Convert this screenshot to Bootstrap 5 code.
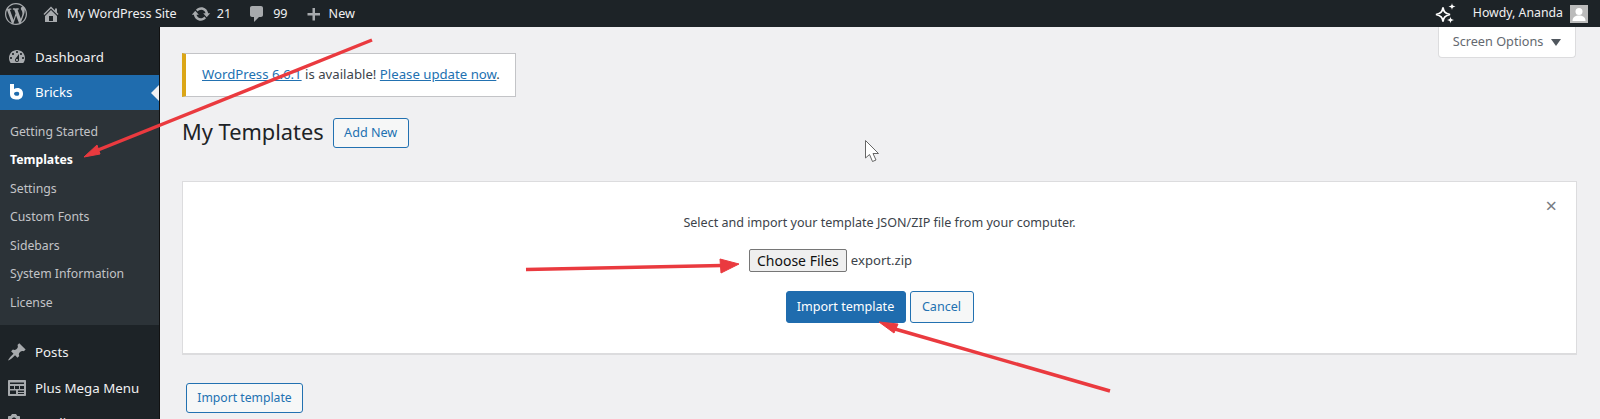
<!DOCTYPE html>
<html lang="en"><head><meta charset="utf-8"><title>My Templates</title>
<link href="https://cdn.jsdelivr.net/npm/bootstrap@5.3.0/dist/css/bootstrap.min.css" rel="stylesheet">
<style>
html,body{height:419px;overflow:hidden}
body{font-family:"Noto Sans","Open Sans",sans-serif;font-size:12.55px;background:#f0f0f2;color:#3c434a;position:relative}
svg.ico{fill:currentColor;display:block;flex:none}
.wpbar{height:27px;background:#1d2327;color:#f0f0f1;font-size:12.6px;padding:0 12px 0 5px;white-space:nowrap}
.wpbar svg{color:#a7aaad}
.wpbar .bitem{line-height:27px;gap:6px}
.wpbar .howdy{font-size:12.3px}
.wplogo{margin-right:14px}
.wpgap1{margin-left:14px}
.wpgap2{margin-left:16px}
.wpgap3{margin-left:15px}
.wpsparkle{margin-right:15px}
.wpavatar{margin-left:7px;display:block}
.wpside{width:160px;height:392px;flex:none;background:#1d2327;border-right:1px solid #111;padding-top:12px;color:#f0f0f1;font-size:13.3px;overflow:hidden}
.sitem{height:35.5px;padding-left:7px;gap:8px;color:#f0f0f1;white-space:nowrap}
.sitem span{padding-top:2px}
.sitem svg{color:#a7aaad}
.sitem.onit{background:#1f6cae;color:#fff;position:relative;height:35px}
.sitem.onit svg{color:#fff}
.sitem.onit::after{content:"";position:absolute;right:0;top:10px;border:8px solid transparent;border-right-color:#f0f0f2;border-left:0}
.ssub{background:#2c3338;padding:8px 0 8px;font-size:12.25px;color:#c3c4c7;height:215px}
.ssub div{height:28.5px;line-height:28.5px;padding-left:10px}
.ssub .onsub{color:#fff;font-weight:700}
.ssubgap{height:10px}
.wpmain{padding:26px 23px 0 22px;min-width:0}
.wpnotice{align-self:flex-start;height:44px;width:334px;background:#fff;border:1px solid #c3c4c7;border-left:4px solid #dba617;padding-left:16px;line-height:41px;font-size:13.2px;white-space:nowrap}
.wpnotice a,.wplink{color:#2271b1}
.wptitle{margin-top:21px;height:30px;gap:9px}
.wptitle h1{font-size:21.8px;font-weight:400;color:#1d2327;margin:-2px 0 0;line-height:30px;white-space:nowrap}
.wpbtn.btn{--bs-btn-padding-x:0;--bs-btn-padding-y:0;--bs-btn-font-size:12.6px;--bs-btn-line-height:28px;--bs-btn-color:#2271b1;--bs-btn-border-color:#2271b1;--bs-btn-bg:#f6f7f7;--bs-btn-border-radius:3px;white-space:nowrap}
.wpadd.btn{width:76px}
.wpcancel.btn{width:64px;--bs-btn-line-height:30px}
.wpbtn.prim{--bs-btn-bg:#1f6cae;--bs-btn-color:#fff;--bs-btn-border-color:#1f6cae;--bs-btn-line-height:30px;width:120px}
.wpcard{margin-top:33px;height:174px;background:#fff;border:1px solid #dcdcde;border-bottom-width:2px;position:relative;padding-top:32px;text-align:center}
.wpclose{position:absolute;right:19px;top:11px;font-size:20px;line-height:26px;color:#787c82}
.filerow{margin-top:16px;margin-right:98px;height:24px;gap:4px;color:#3c434a;font-size:13.1px}
.filebtn{height:23px;width:98px;border:1px solid #767676;border-radius:2px;background:#efefef;color:#111;font-size:14px;padding:0;line-height:20px;white-space:nowrap}
.acts{margin-top:18px;gap:4px}
.wplast.btn{margin:28px 0 0 4px;align-self:flex-start;width:117px;--bs-btn-font-size:12.2px}
.scropt{position:absolute;top:27px;right:24px;width:138px;height:31px;background:#fff;border:1px solid #dcdcde;border-top:0;border-radius:0 0 4px 4px;color:#646970;font-size:12.7px;gap:8px;white-space:nowrap}
.scropt i{border:5px solid transparent;border-top:7px solid #50575e;border-bottom:0;display:block}
.arrows{position:absolute;left:0;top:0;pointer-events:none}
</style></head><body>
<div class="wpbar d-flex align-items-center justify-content-between">
 <div class="d-flex align-items-center">
  <svg class="ico wplogo" width="22" height="22" viewBox="0 0 20 20"><path d="M20 10c0-5.51-4.49-10-10-10C4.48 0 0 4.49 0 10c0 5.52 4.48 10 10 10 5.51 0 10-4.48 10-10zM7.78 15.37L4.37 6.22c.55-.02 1.17-.08 1.17-.08.5-.06.44-1.13-.06-1.11 0 0-1.45.11-2.37.11-.18 0-.37 0-.58-.01C4.12 2.69 6.87 1.11 10 1.11c2.33 0 4.45.87 6.05 2.34-.68-.11-1.65.39-1.65 1.58 0 .74.45 1.36.9 2.1.35.61.55 1.36.55 2.46 0 1.49-1.4 5-1.4 5l-3.03-8.37c.54-.02.82-.17.82-.17.5-.05.44-1.25-.06-1.22 0 0-1.44.12-2.38.12-.87 0-2.33-.12-2.33-.12-.5-.03-.56 1.2-.06 1.22l.92.08 1.26 3.41zM17.41 10c.24-.64.74-1.87.43-4.25.7 1.29 1.05 2.71 1.05 4.25 0 3.29-1.73 6.24-4.4 7.78.97-2.59 1.94-5.2 2.92-7.78zM6.1 18.09C3.12 16.65 1.11 13.53 1.11 10c0-1.3.23-2.48.72-3.59C3.25 10.3 4.67 14.2 6.1 18.09zm4.03-6.63l2.58 6.98c-.86.29-1.76.45-2.71.45-.79 0-1.57-.11-2.29-.33.81-2.38 1.62-4.74 2.42-7.1z"/></svg>
  <div class="bitem d-flex align-items-center"><svg class="ico" width="20" height="20" viewBox="0 0 20 20"><path d="M16 8.5l1.53 1.53-1.06 1.06L10 4.62l-6.47 6.47-1.06-1.06L10 2.5l4 4v-2h2v4zm-6-2.46l6 5.99V18H4v-5.97zM12 17v-5H8v5h4z"/></svg><span>My WordPress Site</span></div>
  <div class="bitem d-flex align-items-center wpgap1"><svg class="ico" width="20" height="20" viewBox="0 0 20 20"><path d="M10.2 3.28c3.53 0 6.43 2.61 6.92 6h2.08l-3.5 4-3.5-4h2.32c-.45-1.97-2.21-3.45-4.32-3.45-1.45 0-2.73.71-3.54 1.78L4.95 5.66C6.23 4.2 8.11 3.28 10.2 3.28zm-.4 13.44c-3.52 0-6.43-2.61-6.92-6H.8l3.5-4c1.17 1.33 2.33 2.67 3.5 4H5.48c.45 1.97 2.21 3.45 4.32 3.45 1.45 0 2.73-.71 3.54-1.78l1.71 1.95c-1.28 1.46-3.15 2.38-5.25 2.38z"/></svg><span>21</span></div>
  <div class="bitem d-flex align-items-center wpgap2"><svg class="ico" width="20" height="20" viewBox="0 0 20 20"><path d="M5 2h9c1.1 0 2 .9 2 2v7c0 1.1-.9 2-2 2h-2l-5 5v-5H5c-1.1 0-2-.9-2-2V4c0-1.1.9-2 2-2z"/></svg><span>99</span></div>
  <div class="bitem d-flex align-items-center wpgap3"><svg class="ico" width="20" height="20" viewBox="0 0 20 20"><path d="M12 4v5h5v2.500h-5v5H9.500v-5h-5V9h5V4z"/></svg><span>New</span></div>
 </div>
 <div class="d-flex align-items-center">
  <svg class="ico wpsparkle" width="24" height="24" viewBox="0 0 24 24"><path fill="none" stroke="#fff" stroke-width="1.700" d="M9 5.500c.7 4.300 1.900 5.700 7 7-5.100 1.300-6.300 2.700-7 7-.7-4.300-1.900-5.700-7-7 5.100-1.300 6.300-2.700 7-7z"/><path fill="#fff" d="M18 1c.3 2.300 1 3 3.500 3.500C19 5 18.300 5.700 18 8c-.3-2.300-1-3-3.500-3.500C17 4 17.700 3.300 18 1zM16.500 14.500c.3 2.300 1 3 3.500 3.500-2.500.5-3.200 1.200-3.500 3.500-.3-2.300-1-3-3.500-3.500 2.500-.5 3.200-1.200 3.500-3.500z"/></svg>
  <span class="howdy">Howdy, Ananda</span>
  <svg class="wpavatar" width="18" height="18" viewBox="0 0 18 18"><rect width="18" height="18" fill="#bbb"/><circle cx="9" cy="6.500" r="3.500" fill="#fff"/><path d="M2.500 16c0-4 3-5.500 6.500-5.500s6.500 1.500 6.500 5.500z" fill="#fff"/></svg>
 </div>
</div>
<div class="d-flex">
 <nav class="wpside">
  <div class="sitem d-flex align-items-center"><svg class="ico" width="20" height="20" viewBox="0 0 20 20"><path d="M3.760 16h12.480c1.100-1.370 1.760-3.110 1.760-5 0-4.420-3.580-8-8-8s-8 3.580-8 8c0 1.890.66 3.630 1.760 5zM10 4c.55 0 1 .45 1 1s-.45 1-1 1-1-.45-1-1 .45-1 1-1zM6 6c.55 0 1 .45 1 1s-.45 1-1 1-1-.45-1-1 .45-1 1-1zm8 0c.55 0 1 .45 1 1s-.45 1-1 1-1-.45-1-1 .45-1 1-1zm-5.370 5.550L12 7v6c0 1.100-.9 2-2 2s-2-.9-2-2c0-.57.24-1.080.63-1.450zM4 10c.55 0 1 .45 1 1s-.45 1-1 1-1-.45-1-1 .45-1 1-1zm12 0c.55 0 1 .45 1 1s-.45 1-1 1-1-.45-1-1 .45-1 1-1zm-5 3c0-.55-.45-1-1-1s-1 .45-1 1 .45 1 1 1 1-.45 1-1z"/></svg><span>Dashboard</span></div>
  <div class="sitem onit d-flex align-items-center"><svg class="ico" width="20" height="20" viewBox="0 0 20 20"><path fill-rule="evenodd" d="M3 2h4v5c1-.7 2.200-1 3.500-1 3.300 0 5.500 2.300 5.500 5.700S13.800 17.500 10.500 17.500C6.500 17.500 3 16.500 3 12zM10 9.800c-1.700 0-3 .8-3 1.900s1.300 2.100 3 2.100 2.200-1 2.200-2.100-.5-1.900-2.200-1.900z"/></svg><span>Bricks</span></div>
  <div class="ssub"><div>Getting Started</div><div class="onsub">Templates</div><div>Settings</div><div>Custom Fonts</div><div>Sidebars</div><div>System Information</div><div>License</div></div>
  <div class="ssubgap"></div>
  <div class="sitem d-flex align-items-center"><svg class="ico" width="20" height="20" viewBox="0 0 20 20"><path d="M10.440 3.020l1.820-1.820 6.360 6.350-1.830 1.820c-1.050-.68-2.480-.57-3.410.36l-.75.75c-.92.93-1.040 2.350-.35 3.410l-1.830 1.820-2.410-2.410-2.800 2.790c-.42.42-3.380 2.710-3.800 2.290s1.860-3.390 2.280-3.810l2.790-2.790L4.100 9.360l1.830-1.820c1.050.69 2.480.57 3.400-.36l.75-.75c.93-.92 1.050-2.350.36-3.410z"/></svg><span>Posts</span></div>
  <div class="sitem d-flex align-items-center"><svg class="ico" width="20" height="20" viewBox="0 0 20 20"><path fill-rule="evenodd" d="M2 2h16c.6 0 1 .4 1 1v14c0 .6-.4 1-1 1H2c-.6 0-1-.4-1-1V3c0-.6.4-1 1-1zm1 2.500V6h14V4.500zM3 8v3h4V8zm5 0v3h4V8zm5 0v3h4V8zM3 12.500V16h6v-3.500zm8 0V14h6v-1.500zm0 2.500v1h6v-1z"/></svg><span>Plus Mega Menu</span></div>
  <div class="sitem d-flex align-items-center"><svg class="ico" width="20" height="20" viewBox="0 0 20 20"><path d="M13 11V4c0-.55-.45-1-1-1h-1.670L9 1H5L3.670 3H2c-.55 0-1 .45-1 1v7c0 .55.45 1 1 1h10c.55 0 1-.45 1-1zM7 4.500c1.380 0 2.500 1.120 2.500 2.500S8.380 9.500 7 9.500 4.500 8.380 4.500 7 5.620 4.500 7 4.500zM14 6h5v10.500c0 1.380-1.120 2.500-2.500 2.500S14 17.880 14 16.500s1.120-2.500 2.500-2.500c.17 0 .34.020.5.050V9h-3V6z"/></svg><span>Media</span></div>
 </nav>
 <main class="wpmain flex-grow-1 d-flex flex-column">
  <div class="wpnotice"><a class="wplink" href="#">WordPress 6.6.1</a> is available! <a class="wplink" href="#">Please update now</a>.</div>
  <div class="wptitle d-flex align-items-center"><h1>My Templates</h1><a class="btn wpbtn wpadd" href="#">Add New</a></div>
  <section class="wpcard">
   <span class="wpclose">×</span>
   <div>Select and import your template JSON/ZIP file from your computer.</div>
   <div class="filerow d-flex justify-content-center align-items-center"><button class="filebtn" type="button">Choose Files</button><span>export.zip</span></div>
   <div class="acts d-flex justify-content-center"><button class="btn wpbtn prim" type="button">Import template</button><button class="btn wpbtn wpcancel" type="button">Cancel</button></div>
  </section>
  <a class="btn wpbtn wplast" href="#">Import template</a>
 </main>
</div>
<div class="scropt d-flex align-items-center justify-content-center"><span>Screen Options</span><i></i></div>
<svg class="arrows" width="1600" height="419" viewBox="0 0 1600 419">
 <g fill="#ea3a3f" stroke="#ea3a3f" stroke-linejoin="round">
  <path d="M372 40L98 150" stroke-width="3.500" fill="none"/><path d="M84 157L97 145 100 154z"/>
  <path d="M526 269.500L722 265.500" stroke-width="3.500" fill="none"/><path d="M739 264L720 259 721 273z"/>
  <path d="M1110 391L895 329" stroke-width="3.500" fill="none"/><path d="M879 322L898 324 894 333z"/>
 </g>
 <path d="M865.500 140.500v17.500l4-3.500 3 7 3.500-1.500-3-6.500h5.500z" fill="#fff" stroke="#666" stroke-width="1"/>
</svg>
</body></html>
